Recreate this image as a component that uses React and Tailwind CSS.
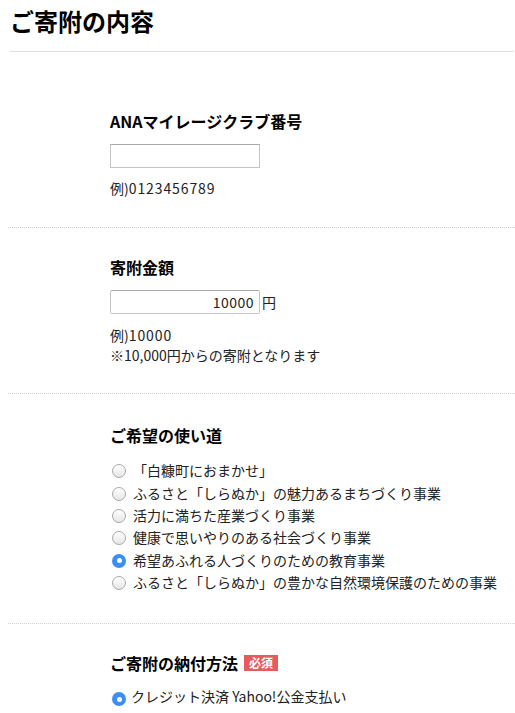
import React from "react";

const font = { fontFamily: '"Noto Sans CJK JP", sans-serif' };

function Radio({ checked }) {
  if (checked) {
    return (
      <span className="flex h-[14px] w-[14px] shrink-0 items-center justify-center rounded-full bg-[#3a8ef5] translate-y-[1px]">
        <span className="h-[5px] w-[5px] rounded-full bg-white" />
      </span>
    );
  }
  return (
    <span className="h-[14px] w-[14px] shrink-0 rounded-full border border-[#a9a9a9] bg-gradient-to-b from-white to-[#e6e6e6] translate-y-[1px]" />
  );
}

const uses = [
  "「白糠町におまかせ」",
  "ふるさと「しらぬか」の魅力あるまちづくり事業",
  "活力に満ちた産業づくり事業",
  "健康で思いやりのある社会づくり事業",
  "希望あふれる人づくりのための教育事業",
  "ふるさと「しらぬか」の豊かな自然環境保護のための事業",
];

export default function App() {
  return (
    <div className="w-[515px] bg-white text-[#222]" style={font}>
      <div className="ml-[10px] mr-[1px] border-b border-[#dedede] pt-[5px] pb-[14px]">
        <h1 className="text-[24px] font-bold leading-[32px] text-black">ご寄附の内容</h1>
      </div>

      <div className="ml-[8px] border-b border-dotted border-[#cfcfcf] pl-[102px] pt-[57px] pb-[29px]">
        <h2 className="text-[16px] font-bold leading-[24px] text-black">ANAマイレージクラブ番号</h2>
        <div className="mt-[11px] h-[24px] w-[150px] border border-[#c4c4c4] border-t-[#aaa] bg-white" />
        <p className="mt-[10px] text-[14px] leading-[20px]">
          例)<span className="tracking-[0.9px]">0123456789</span>
        </p>
      </div>

      <div className="ml-[8px] border-b border-dotted border-[#cfcfcf] pl-[102px] pt-[27px] pb-[28px]">
        <h2 className="text-[16px] font-bold leading-[24px] text-black">寄附金額</h2>
        <div className="mt-[11px] flex items-center">
          <div className="flex h-[24px] w-[150px] items-center justify-end border border-[#c4c4c4] border-t-[#aaa] rounded-[2px] bg-white pr-[5px] text-[14px] tracking-[0.5px]">
            10000
          </div>
          <span className="ml-[2px] text-[14px] leading-[20px]">円</span>
        </div>
        <p className="mt-[11px] text-[14px] leading-[20px]">
          例)<span className="tracking-[0.9px]">10000</span>
        </p>
        <p className="text-[14px] leading-[20px]">※10,000円からの寄附となります</p>
      </div>

      <div className="ml-[8px] border-b border-dotted border-[#cfcfcf] pl-[102px] pt-[29px] pb-[30px]">
        <h2 className="text-[16px] font-bold leading-[24px] text-black">ご希望の使い道</h2>
        <ul className="mt-[12px]">
          {uses.map((u, i) => (
            <li key={i} className="flex h-[22.4px] items-center text-[14px]">
              <span className="ml-[2px] mr-[7px] flex">
                <Radio checked={i === 4} />
              </span>
              <span className="leading-[20px]">{u}</span>
            </li>
          ))}
        </ul>
      </div>

      <div className="ml-[8px] pl-[102px] pt-[27px] pb-[10px]">
        <h2 className="flex items-center text-[16px] font-bold leading-[24px] text-black">
          ご寄附の納付方法
          <span className="ml-[6px] flex h-[16px] w-[34px] items-center justify-center bg-[#e65b5b] text-[12px] font-bold leading-none text-white">
            必須
          </span>
        </h2>
        <div className="mt-[10px] flex h-[22px] items-center text-[14px]">
          <span className="ml-[2px] mr-[5px] flex translate-y-[2px]">
            <Radio checked />
          </span>
          <span className="leading-[20px]">クレジット決済 Yahoo!公金支払い</span>
        </div>
      </div>
    </div>
  );
}
